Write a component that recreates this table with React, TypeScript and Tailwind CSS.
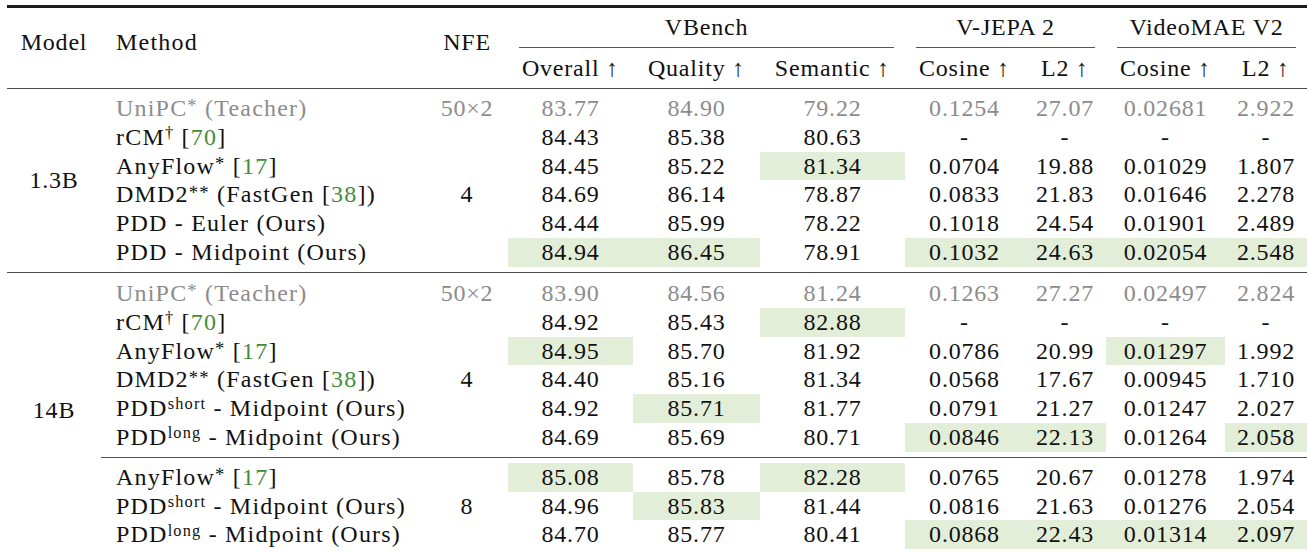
import type { ReactNode } from 'react';

/**
 * Results table (booktabs style): VBench + feature-space metrics for
 * distilled video models at 1.3B and 14B scale.
 */

type RowData = {
    method: ReactNode;
    nfe?: string;
    gray?: boolean;
    vals: string[];
    hi: number[];
};

// value columns: Overall, Quality, Semantic, V-JEPA cos, V-JEPA L2, VideoMAE cos, VideoMAE L2
const VAL_W = ['w-[125px]', 'w-[127px]', 'w-[145px]', 'w-[119px]', 'w-[82px]', 'w-[119px]', 'w-[82px]'];

function Cite({ n }: { n: number }) {
    return (
        <>
            [<span className="text-[#3f8d3a]">{n}</span>]
        </>
    );
}

function Sup({ children }: { children: ReactNode }) {
    return <span className="relative top-[-0.42em] text-[0.68em] leading-none">{children}</span>;
}

function Star({ n = 1 }: { n?: number }) {
    return <span className="relative top-[-0.2em] text-[0.78em] leading-none">{'*'.repeat(n)}</span>;
}

const teacher = (
    <>
        UniPC<Star /> (Teacher)
    </>
);
const rcm = (
    <>
        rCM<Sup>†</Sup> <Cite n={70} />
    </>
);
const anyflow = (
    <>
        AnyFlow<Star /> <Cite n={17} />
    </>
);
const dmd = (
    <>
        DMD2<Star n={2} /> (FastGen <Cite n={38} />)
    </>
);
const pddShort = (
    <>
        PDD<Sup>short</Sup> - Midpoint (Ours)
    </>
);
const pddLong = (
    <>
        PDD<Sup>long</Sup> - Midpoint (Ours)
    </>
);

const DASH = ['-', '-', '-', '-'];

const small: RowData[] = [
    { method: teacher, nfe: '50×2', gray: true, vals: ['83.77', '84.90', '79.22', '0.1254', '27.07', '0.02681', '2.922'], hi: [] },
    { method: rcm, vals: ['84.43', '85.38', '80.63', ...DASH], hi: [] },
    { method: anyflow, vals: ['84.45', '85.22', '81.34', '0.0704', '19.88', '0.01029', '1.807'], hi: [2] },
    { method: dmd, nfe: '4', vals: ['84.69', '86.14', '78.87', '0.0833', '21.83', '0.01646', '2.278'], hi: [] },
    { method: <>PDD - Euler (Ours)</>, vals: ['84.44', '85.99', '78.22', '0.1018', '24.54', '0.01901', '2.489'], hi: [] },
    { method: <>PDD - Midpoint (Ours)</>, vals: ['84.94', '86.45', '78.91', '0.1032', '24.63', '0.02054', '2.548'], hi: [0, 1, 3, 4, 5, 6] },
];

const large4: RowData[] = [
    { method: teacher, nfe: '50×2', gray: true, vals: ['83.90', '84.56', '81.24', '0.1263', '27.27', '0.02497', '2.824'], hi: [] },
    { method: rcm, vals: ['84.92', '85.43', '82.88', ...DASH], hi: [2] },
    { method: anyflow, vals: ['84.95', '85.70', '81.92', '0.0786', '20.99', '0.01297', '1.992'], hi: [0, 5] },
    { method: dmd, nfe: '4', vals: ['84.40', '85.16', '81.34', '0.0568', '17.67', '0.00945', '1.710'], hi: [] },
    { method: pddShort, vals: ['84.92', '85.71', '81.77', '0.0791', '21.27', '0.01247', '2.027'], hi: [1] },
    { method: pddLong, vals: ['84.69', '85.69', '80.71', '0.0846', '22.13', '0.01264', '2.058'], hi: [3, 4, 6] },
];

const large8: RowData[] = [
    { method: anyflow, vals: ['85.08', '85.78', '82.28', '0.0765', '20.67', '0.01278', '1.974'], hi: [0, 2] },
    { method: pddShort, nfe: '8', vals: ['84.96', '85.83', '81.44', '0.0816', '21.63', '0.01276', '2.054'], hi: [1] },
    { method: pddLong, vals: ['84.70', '85.77', '80.41', '0.0868', '22.43', '0.01314', '2.097'], hi: [3, 4, 5, 6] },
];

function Row({ r }: { r: RowData }) {
    return (
        <div className={`flex h-[28.8px] leading-[28.8px] ${r.gray ? 'text-[#8c8c8c]' : 'text-[#111]'}`}>
            <div className="w-[325px] whitespace-nowrap px-[15px] tracking-[1.2px]">{r.method}</div>
            <div className="w-[82px] text-center">{r.nfe}</div>
            {r.vals.map((v, i) => (
                <div key={i} className={`${VAL_W[i]} text-center ${r.hi.includes(i) ? 'bg-[#e2eed8]' : ''}`}>
                    {v}
                </div>
            ))}
        </div>
    );
}

function GroupHead({ label, width }: { label: string; width: string }) {
    return (
        <div className={`flex ${width} flex-col`}>
            <div className="flex flex-1 items-center justify-center">{label}</div>
            <div className="mx-[11px] h-px bg-[#555]" />
        </div>
    );
}

export default function App() {
    return (
        <div className="h-[554px] w-[1307px] overflow-hidden bg-white pl-[7px] pt-[5px] font-[Liberation_Serif,serif] text-[24px] leading-none tracking-[0.8px] text-[#111]">
            <div className="w-[1300px]">
                <div className="h-[2.5px] bg-[#1c1c1c]" />

                {/* header */}
                <div className="flex h-[80px]">
                    <div className="flex w-[94px] items-center justify-center pb-[11px]">Model</div>
                    <div className="flex w-[325px] items-center px-[15px] pb-[11px] tracking-[1.2px]">Method</div>
                    <div className="flex w-[82px] items-center justify-center pb-[11px]">NFE</div>
                    <div className="flex flex-col">
                        <div className="flex h-[40px]">
                            <GroupHead label="VBench" width="w-[397px]" />
                            <GroupHead label="V-JEPA 2" width="w-[201px]" />
                            <GroupHead label="VideoMAE V2" width="w-[201px]" />
                        </div>
                        <div className="flex h-[40px]">
                            {['Overall ↑', 'Quality ↑', 'Semantic ↑', 'Cosine ↑', 'L2 ↑', 'Cosine ↑', 'L2 ↑'].map((h, i) => (
                                <div key={i} className={`flex ${VAL_W[i]} items-center justify-center whitespace-pre`}>
                                    {h}
                                </div>
                            ))}
                        </div>
                    </div>
                </div>

                <div className="h-[1.6px] bg-[#4a4a4a]" />

                {/* 1.3B */}
                <div className="flex py-[5px]">
                    <div className="flex w-[94px] items-center justify-center">1.3B</div>
                    <div className="flex flex-col">
                        {small.map((r, i) => (
                            <Row key={i} r={r} />
                        ))}
                    </div>
                </div>

                <div className="h-[1.6px] bg-[#4a4a4a]" />

                {/* 14B */}
                <div className="flex pt-[5.5px]">
                    <div className="w-[94px] pt-[117px] text-center leading-[28.8px]">14B</div>
                    <div className="flex flex-col">
                        {large4.map((r, i) => (
                            <Row key={i} r={r} />
                        ))}
                        <div className="my-[5px] h-px bg-[#555]" />
                        {large8.map((r, i) => (
                            <Row key={i} r={r} />
                        ))}
                    </div>
                </div>
            </div>
        </div>
    );
}
